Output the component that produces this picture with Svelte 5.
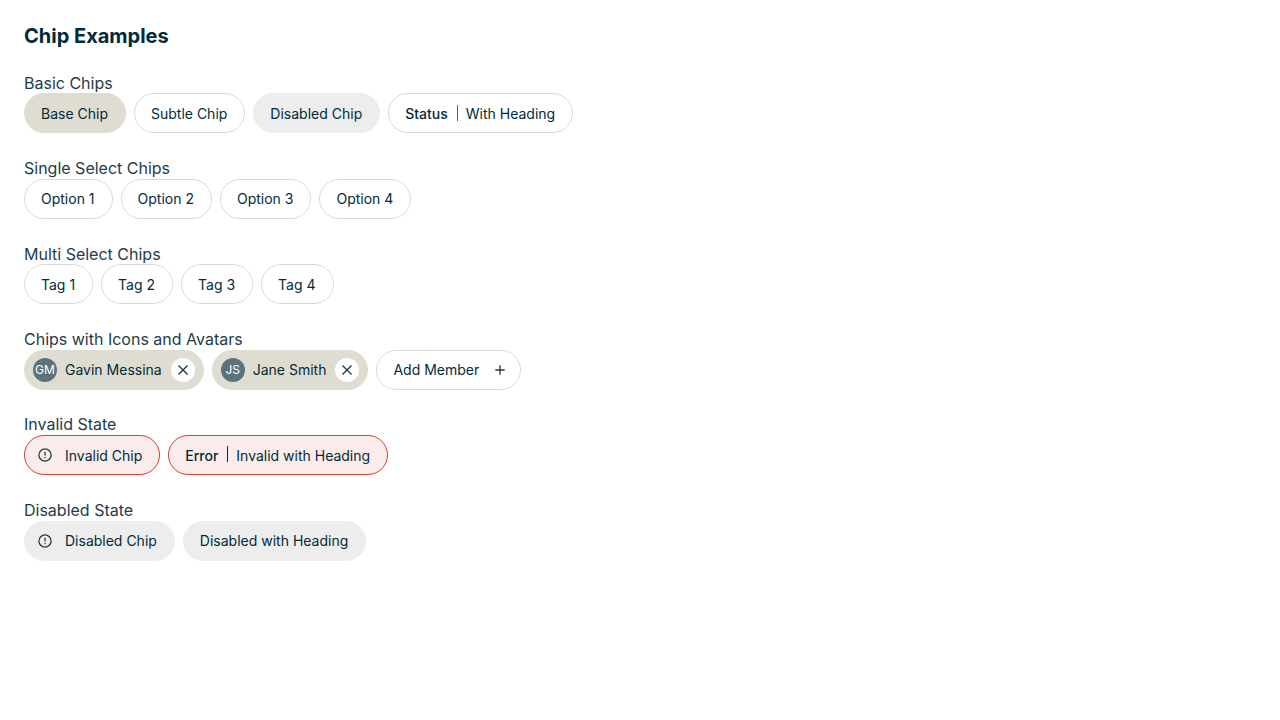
<script>
  const selects = [
    { title: 'Single Select Chips', items: ['Option 1', 'Option 2', 'Option 3', 'Option 4'] },
    { title: 'Multi Select Chips', items: ['Tag 1', 'Tag 2', 'Tag 3', 'Tag 4'] }
  ];
  const members = [
    { initials: 'GM', name: 'Gavin Messina' },
    { initials: 'JS', name: 'Jane Smith' }
  ];
</script>

{#snippet alertIcon()}
  <svg class="alert" viewBox="0 0 16 16" width="16" height="16" aria-hidden="true">
    <circle cx="8" cy="8" r="6.1" fill="none" stroke="currentColor" stroke-width="1.3" />
    <path d="M8 4.8v3.8" stroke="currentColor" stroke-width="1.3" />
    <path d="M8 9.9v1.3" stroke="currentColor" stroke-width="1.3" />
  </svg>
{/snippet}

<main>
  <h1>Chip Examples</h1>

  <section>
    <div class="label">Basic Chips</div>
    <div class="row">
      <button class="chip base">Base Chip</button>
      <button class="chip">Subtle Chip</button>
      <button class="chip disabled">Disabled Chip</button>
      <button class="chip status"><span class="heading">Status</span>With Heading</button>
    </div>
  </section>

  {#each selects as group}
    <section>
      <div class="label">{group.title}</div>
      <div class="row">
        {#each group.items as item}
          <button class="chip">{item}</button>
        {/each}
      </div>
    </section>
  {/each}

  <section>
    <div class="label">Chips with Icons and Avatars</div>
    <div class="row">
      {#each members as m}
        <div class="chip base member">
          <span class="avatar">{m.initials}</span>
          <span>{m.name}</span>
          <button class="close" aria-label="Remove {m.name}">
            <svg viewBox="0 0 16 16" width="16" height="16"><path d="M3.5 3.5l9 9M12.5 3.5l-9 9" stroke="currentColor" stroke-width="1.35" /></svg>
          </button>
        </div>
      {/each}
      <button class="chip add">Add Member
        <svg viewBox="0 0 16 16" width="16" height="16"><path d="M8 3.3v9.4M3.3 8h9.4" stroke="currentColor" stroke-width="1.35" /></svg>
      </button>
    </div>
  </section>

  <section>
    <div class="label">Invalid State</div>
    <div class="row">
      <button class="chip invalid icon">{@render alertIcon()}Invalid Chip</button>
      <button class="chip invalid"><span class="heading">Error</span>Invalid with Heading</button>
    </div>
  </section>

  <section>
    <div class="label">Disabled State</div>
    <div class="row">
      <button class="chip disabled icon">{@render alertIcon()}Disabled Chip</button>
      <button class="chip disabled">Disabled with Heading</button>
    </div>
  </section>
</main>

<style>
  :global(body) { background: #fff; }
  main { padding: 24px; font-family: Inter, sans-serif; color: #012b3a; -webkit-font-smoothing: antialiased; }
  h1 { margin: 0 0 24.65px; font-size: 20px; line-height: 24px; font-weight: 700; }
  section { margin-bottom: 24.66px; }
  .label { padding-bottom: .8px; font-size: 16px; line-height: 20px; color: #253c47; }
  .row { display: flex; gap: 8px; }
  .chip {
    box-sizing: border-box;
    display: flex;
    align-items: center;
    height: 40px;
    margin: 0;
    padding: .8px 17px 0 16px;
    border: 1px solid #d5dcdf;
    border-radius: 20px;
    background: #fff;
    color: #012b3a;
    font: 400 14px/20px Inter, sans-serif;
    white-space: nowrap;
  }
  .base { background: #dfdcd1; border-color: #dfdcd1; }
  .disabled { background: #ededed; border-color: #ededed; }
  .invalid { background: #faeceb; border-color: #d43f30; }
  .heading {
    display: flex;
    font-weight: 500;
  }
  .heading::after {
    content: '';
    width: 1px;
    height: 16px;
    margin: .8px 8px 0 9px;
    background: currentColor;
  }
  .status .heading::after { background: #4d6b75; }
  .member { padding: 0 8px; }
  .avatar {
    display: grid;
    place-items: center;
    width: 24px;
    height: 24px;
    margin-right: 8px;
    border-radius: 50%;
    background: #5c737e;
    color: #fff;
    font-size: 12px;
  }
  .close {
    display: grid;
    place-items: center;
    width: 24px;
    height: 24px;
    margin: 0 0 0 9px;
    padding: 0;
    border: 0;
    border-radius: 50%;
    background: #fff;
    color: #1b3844;
  }
  .add { padding-right: 12px; }
  .add svg { margin-left: 13px; color: #253c47; }
  .icon { padding-left: 12px; }
  .alert { margin: 0 12px .8px 0; color: #253c47; }
</style>
